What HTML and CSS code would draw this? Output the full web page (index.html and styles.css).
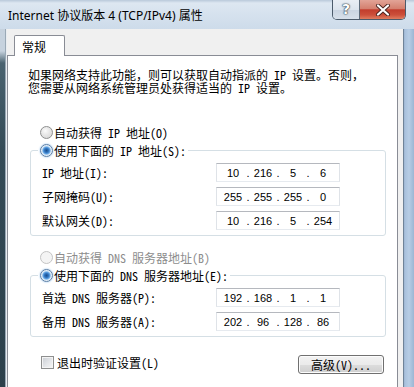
FILE: index.html
```html
<!DOCTYPE html>
<html lang="zh-CN">
<head>
  <meta charset="UTF-8" />
  <meta name="viewport" content="width=device-width, initial-scale=1.0"/>
  <title>Internet 协议版本 4 (TCP/IPv4) 属性</title>
  <link rel="stylesheet" href="styles.css">
</head>
<body>

  <div class="window">
    <header class="titlebar">
      <span class="title">Internet 协议版本 4 (TCP/IPv4) 属性</span>
      <div class="caption-buttons">
        <span class="btn-help">?</span>
        <span class="btn-close">
          <svg width="16" height="12" viewBox="0 0 16 12">
            <path d="M3 1.5 L13 10.5 M13 1.5 L3 10.5" stroke="#4a2420" stroke-width="4" stroke-linecap="round"/>
            <path d="M3 1.5 L13 10.5 M13 1.5 L3 10.5" stroke="#fff" stroke-width="2.2" stroke-linecap="round"/>
          </svg>
        </span>
      </div>
    </header>

    <div class="frame">
      <div class="edge-left"></div>

      <div class="client">
        <div class="tabs">
          <span class="tab">常规</span>
        </div>

        <section class="panel">
          <p class="intro">如果网络支持此功能，则可以获取自动指派的 IP 设置。否则，<br>您需要从网络系统管理员处获得适当的 IP 设置。</p>

          <label class="option outside"><input type="radio" name="ip">自动获得 IP 地址(O)</label>
          <fieldset class="group">
            <legend><label class="option"><input type="radio" name="ip" checked>使用下面的 IP 地址(S):</label></legend>
            <div class="row"><span>IP 地址(I):</span><div class="ipbox" data-ip="10.216.5.6"></div></div>
            <div class="row"><span>子网掩码(U):</span><div class="ipbox" data-ip="255.255.255.0"></div></div>
            <div class="row"><span>默认网关(D):</span><div class="ipbox" data-ip="10.216.5.254"></div></div>
          </fieldset>

          <label class="option outside disabled"><input type="radio" name="dns" disabled>自动获得 DNS 服务器地址(B)</label>
          <fieldset class="group">
            <legend><label class="option"><input type="radio" name="dns" checked>使用下面的 DNS 服务器地址(E):</label></legend>
            <div class="row"><span>首选 DNS 服务器(P):</span><div class="ipbox" data-ip="192.168.1.1"></div></div>
            <div class="row"><span>备用 DNS 服务器(A):</span><div class="ipbox" data-ip="202.96.128.86"></div></div>
          </fieldset>

          <div class="footer">
            <label class="check"><input type="checkbox">退出时验证设置(L)</label>
            <button class="btn">高级(V)...</button>
          </div>
        </section>
      </div>

      <div class="edge-right"></div>
    </div>
  </div>

  <script>
    // split each address into the four fields of the IP control
    document.querySelectorAll('.ipbox').forEach(box => {
      box.dataset.ip.split('.').forEach((part, i) => {
        if (i > 0) {
          const dot = document.createElement('span');
          dot.className = 'dot';
          dot.textContent = '.';
          box.appendChild(dot);
        }
        const seg = document.createElement('span');
        seg.className = 'seg';
        seg.textContent = part;
        box.appendChild(seg);
      });
    });
  </script>
</body>
</html>
```

FILE: styles.css
```css
body {
  margin: 0;
  width: 414px;
  height: 387px;
  overflow: hidden;
  font: 12px "Noto Sans Mono CJK SC", "Liberation Mono", "Noto Sans CJK SC", monospace;
  color: #000;
  background: #2f4550;
}
.window {
  display: flex;
  flex-direction: column;
  height: 387px;
}
.titlebar {
  flex-shrink: 0;
  display: flex;
  justify-content: space-between;
  align-items: flex-start;
  height: 29px;
  padding: 0 8px;
  background: linear-gradient(to bottom, #b9c9da 0, #dde7f1 3px, #d6e2ee 14px, #cddbea 100%);
}
.title {
  padding-top: 7px;
  font: 12px/17px "Noto Sans", "Noto Sans CJK SC", sans-serif;
  color: #000;
}
.caption-buttons {
  display: flex;
  height: 19px;
  border: 1px solid #4c5b6b;
  border-top: none;
  border-radius: 0 0 5px 5px;
  overflow: hidden;
}
.btn-help {
  width: 26px;
  text-align: center;
  font: bold 14px/19px "DejaVu Sans", sans-serif;
  color: #fff;
  text-shadow: 0 0 1px #33404c, 0 0 1px #33404c, 0 0 2px #33404c;
  background: linear-gradient(to bottom, #e9eef4 0, #dce4ed 50%, #c9d4e1 51%, #d7e0ea 100%);
  border-right: 1px solid #5d6b7a;
}
.btn-close {
  display: flex;
  align-items: center;
  justify-content: center;
  width: 45px;
  background: linear-gradient(to bottom, #e2a497 0, #d4806f 45%, #c23d2d 52%, #cc4f3a 78%, #e07c5f 100%);
}
.frame {
  display: flex;
  flex: 1;
  min-height: 0;
}
.edge-left {
  width: 7px;
  background: linear-gradient(to bottom, #c6d2de 0, #c6d2de 22px, #4a6370 34px, #344b57 120px, #2c404b 100%);
  box-shadow: inset -1px 0 #e9edf1, inset -2px 0 #9aa9b6;
}
.edge-right {
  width: 11px;
  background: linear-gradient(to right, #8ea6c2 0, #a9c1dc 2px, #b7cde5 6px, #9db6d3 100%);
  box-shadow: inset 1px 0 #6f8398;
}
.client {
  flex: 1;
  display: flex;
  flex-direction: column;
  background: #f0f0f0;
  padding-top: 6px;
}
.tabs {
  display: flex;
  height: 20px;
  padding-left: 7px;
}
.tab {
  position: relative;
  z-index: 1;
  box-sizing: border-box;
  width: 51px;
  height: 21px;
  padding: 3px 0 0 7px;
  font: 12px/16px "Noto Sans CJK SC", sans-serif;
  background: #fff;
  border: 1px solid #898c95;
  border-bottom: none;
  border-radius: 2px 2px 0 0;
}
.panel {
  flex: 1;
  margin-right: 5px;
  background: #fff;
  border: 1px solid #898c95;
  border-bottom: none;
}
.intro {
  margin: 12px 0 0 20px;
  line-height: 13px;
  white-space: nowrap;
}
.option {
  display: flex;
  align-items: center;
  gap: 1px;
  height: 18px;
  white-space: nowrap;
}
.option.outside {
  margin-left: 32px;
}
.panel > .option:first-of-type {
  margin-top: 29px;
}
.option.disabled {
  margin-top: 12px;
  color: #8d8d8d;
}
input[type="radio"] {
  appearance: none;
  width: 13px;
  height: 13px;
  margin: 0;
  border: 1px solid #8e8f8f;
  border-radius: 50%;
  background: radial-gradient(circle at 40% 35%, #fbfbfb 0, #e6e6e6 45%, #d2d2d2 100%);
}
input[type="radio"]:checked {
  border-color: #5b7fa6;
  background: radial-gradient(circle, #1b4f8c 0, #2f72bd 2px, #66a8e6 3.5px, #cfe3f5 4.5px, #f4f7fa 5.5px);
  box-shadow: 0 0 2px #7fb3e6;
}
input[type="radio"]:disabled {
  border-color: #c4c4c4;
  background: #f4f4f4;
}
.group {
  margin: 0 11px 0 22px;
  padding: 4px 0 5px 11px;
  border: 1px solid #d5dfe5;
  border-radius: 3px;
  min-width: 0;
}
.group legend {
  margin-left: -4px;
  padding: 0 2px;
}
.row {
  display: grid;
  grid-template-columns: 174px 124px;
  align-items: center;
  height: 19px;
  white-space: nowrap;
}
.row + .row {
  margin-top: 5px;
}
.ipbox {
  display: flex;
  align-items: center;
  box-sizing: border-box;
  width: 124px;
  height: 19px;
  padding-left: 4px;
  font: 11px "Liberation Sans", Arial, sans-serif;
  background: #fff;
  border: 1px solid;
  border-color: #b5b8be #dfe3e8 #e6eaef #dfe3e8;
}
.seg {
  width: 24px;
  text-align: center;
}
.dot {
  width: 6px;
  text-align: center;
}
.footer {
  display: flex;
  justify-content: space-between;
  align-items: flex-start;
  margin-top: 16px;
  padding: 0 13px 0 33px;
}
.check {
  display: flex;
  align-items: center;
  gap: 3px;
  height: 18px;
}
input[type="checkbox"] {
  appearance: none;
  width: 13px;
  height: 13px;
  margin: 0;
  border: 1px solid #8e8f8f;
  background: linear-gradient(135deg, #c9cdd3 0, #e4e6e9 55%, #f7f7f7 100%);
  box-shadow: inset 0 0 0 1px #f4f4f4;
}
.btn {
  margin-top: 2px;
  width: 86px;
  height: 19px;
  padding: 0;
  font: 12px/17px "Noto Sans Mono CJK SC", "Liberation Mono", "Noto Sans CJK SC", monospace;
  color: #000;
  border: 1px solid #707070;
  border-radius: 3px;
  background: linear-gradient(to bottom, #f2f2f2 0, #ebebeb 50%, #dddddd 51%, #cfcfcf 100%);
  box-shadow: inset 0 0 0 1px #fcfcfc;
}
```
